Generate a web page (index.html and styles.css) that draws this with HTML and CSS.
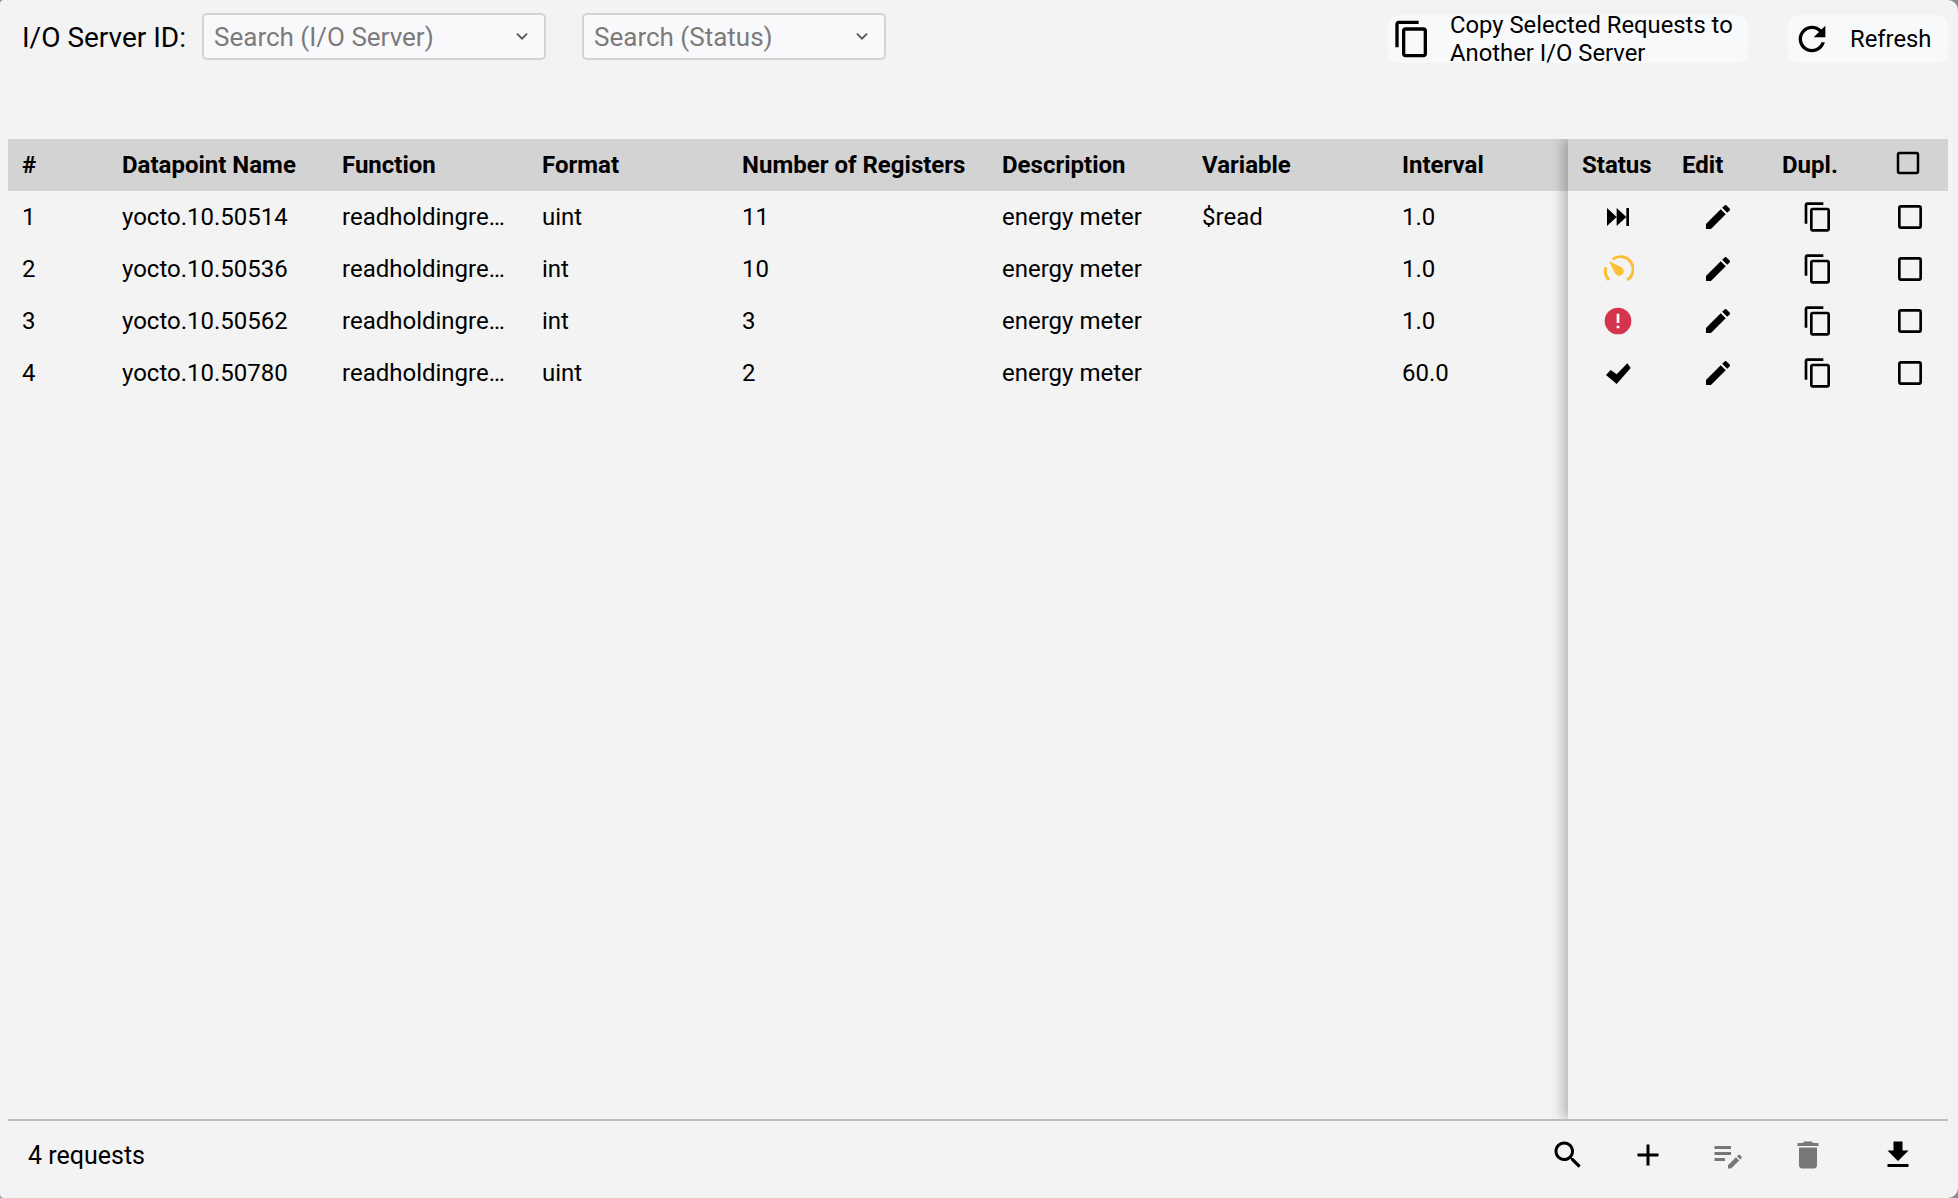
FILE: index.html
```html
<!DOCTYPE html>
<html lang="en">
<head>
<meta charset="utf-8">
<title>Requests</title>
<link rel="stylesheet" href="styles.css">
</head>
<body>
<svg class="defs" width="0" height="0" aria-hidden="true">
  <symbol id="i-copy" viewBox="0 0 24 24"><path d="M16 1H4c-1.1 0-2 .9-2 2v14h2V3h12V1zm3 4H8c-1.1 0-2 .9-2 2v14c0 1.1.9 2 2 2h11c1.1 0 2-.9 2-2V7c0-1.1-.9-2-2-2zm0 16H8V7h11v14z"/></symbol>
  <symbol id="i-edit" viewBox="0 0 24 24"><path d="M3 17.25V21h3.75L17.81 9.94l-3.75-3.75L3 17.25zM20.71 7.04c.39-.39.39-1.02 0-1.41l-2.34-2.34c-.39-.39-1.02-.39-1.41 0l-1.83 1.83 3.75 3.75 1.83-1.83z"/></symbol>
  <symbol id="i-box" viewBox="0 0 24 24"><path d="M19 5v14H5V5h14m0-2H5c-1.1 0-2 .9-2 2v14c0 1.1.9 2 2 2h14c1.1 0 2-.9 2-2V5c0-1.1-.9-2-2-2z"/></symbol>
</svg>
<div class="page">
  <header class="topbar">
    <span class="label">I/O Server ID:</span>
    <div class="select select-server"><span>Search (I/O Server)</span><svg class="chev" viewBox="0 0 12 8"><path d="M1.5 1.5 6 6l4.5-4.5" fill="none" stroke="#555" stroke-width="1.6"/></svg></div>
    <div class="select select-status"><span>Search (Status)</span><svg class="chev" viewBox="0 0 12 8"><path d="M1.5 1.5 6 6l4.5-4.5" fill="none" stroke="#555" stroke-width="1.6"/></svg></div>
    <button class="tbtn tbtn-copy" type="button"><svg class="ico40"><use href="#i-copy"/></svg><span class="tbtn-text">Copy Selected Requests to Another I/O Server</span></button>
    <button class="tbtn tbtn-refresh" type="button"><svg class="ico40" viewBox="0 0 24 24"><path d="M17.65 6.35C16.2 4.9 14.21 4 12 4c-4.42 0-7.99 3.58-7.99 8s3.57 8 7.99 8c3.73 0 6.84-2.55 7.73-6h-2.08c-.82 2.33-3.04 4-5.65 4-3.31 0-6-2.69-6-6s2.69-6 6-6c1.66 0 3.14.69 4.22 1.78L13 11h7V4l-2.35 2.35z"/></svg><span class="tbtn-text">Refresh</span></button>
  </header>
  <main class="table">
    <div class="pane-main">
      <div class="row head">
        <div class="c c1">#</div><div class="c c2">Datapoint Name</div><div class="c c3">Function</div><div class="c c4">Format</div><div class="c c5">Number of Registers</div><div class="c c6">Description</div><div class="c c7">Variable</div><div class="c c8">Interval</div>
      </div>
      <div class="row">
        <div class="c c1">1</div><div class="c c2">yocto.10.50514</div><div class="c c3">readholdingre…</div><div class="c c4">uint</div><div class="c c5">11</div><div class="c c6">energy meter</div><div class="c c7">$read</div><div class="c c8">1.0</div>
      </div>
      <div class="row">
        <div class="c c1">2</div><div class="c c2">yocto.10.50536</div><div class="c c3">readholdingre…</div><div class="c c4">int</div><div class="c c5">10</div><div class="c c6">energy meter</div><div class="c c7"></div><div class="c c8">1.0</div>
      </div>
      <div class="row">
        <div class="c c1">3</div><div class="c c2">yocto.10.50562</div><div class="c c3">readholdingre…</div><div class="c c4">int</div><div class="c c5">3</div><div class="c c6">energy meter</div><div class="c c7"></div><div class="c c8">1.0</div>
      </div>
      <div class="row">
        <div class="c c1">4</div><div class="c c2">yocto.10.50780</div><div class="c c3">readholdingre…</div><div class="c c4">uint</div><div class="c c5">2</div><div class="c c6">energy meter</div><div class="c c7"></div><div class="c c8">60.0</div>
      </div>
    </div>
    <div class="pane-side">
      <div class="row head">
        <div class="c s1">Status</div><div class="c s1">Edit</div><div class="c s1">Dupl.</div><div class="c s4 hbox"><svg class="ico30"><use href="#i-box"/></svg></div>
      </div>
      <div class="row">
        <div class="a s1"><svg class="ico32" viewBox="0 0 24 24"><path d="M3.75 5.250 11 12l-7.250 6.750zM11 5.250 18.250 12 11 18.750zM18.250 5.250h2v13.500h-2z"/></svg></div>
        <div class="a s1"><svg class="ico32"><use href="#i-edit"/></svg></div>
        <div class="a s1"><svg class="ico32"><use href="#i-copy"/></svg></div>
        <div class="a s4"><svg class="ico32"><use href="#i-box"/></svg></div>
      </div>
      <div class="row">
        <div class="a s1"><svg class="ico32" viewBox="0 0 24 24"><path d="M5.200 20.300A9.500 9.500 0 0 1 3 10.700M8 4.700A9.500 9.500 0 1 1 18.800 20.300" fill="none" stroke="#fbbf36" stroke-width="2.200"/><path d="M5.200 6 14.600 10.600A3.500 3.500 0 1 1 9.800 15.400z" fill="#fbbf36"/></svg></div>
        <div class="a s1"><svg class="ico32"><use href="#i-edit"/></svg></div>
        <div class="a s1"><svg class="ico32"><use href="#i-copy"/></svg></div>
        <div class="a s4"><svg class="ico32"><use href="#i-box"/></svg></div>
      </div>
      <div class="row">
        <div class="a s1"><svg class="ico32" viewBox="0 0 24 24"><circle cx="12" cy="12" r="10" fill="#d5344f"/><path d="M11 6.500h2v7h-2zM11 15.500h2v2h-2z" fill="#fff"/></svg></div>
        <div class="a s1"><svg class="ico32"><use href="#i-edit"/></svg></div>
        <div class="a s1"><svg class="ico32"><use href="#i-copy"/></svg></div>
        <div class="a s4"><svg class="ico32"><use href="#i-box"/></svg></div>
      </div>
      <div class="row">
        <div class="a s1"><svg class="ico32" viewBox="0 0 24 24"><path d="M3 13.500 6.500 9.750 11 13 19 4.750 21.500 8.250 11 20.250z"/></svg></div>
        <div class="a s1"><svg class="ico32"><use href="#i-edit"/></svg></div>
        <div class="a s1"><svg class="ico32"><use href="#i-copy"/></svg></div>
        <div class="a s4"><svg class="ico32"><use href="#i-box"/></svg></div>
      </div>
    </div>
  </main>
  <footer class="footer">
    <span class="count">4 requests</span>
    <div class="actions">
      <button class="fbtn" type="button"><svg class="ico36" viewBox="0 0 24 24"><path d="M15.500 14h-.79l-.28-.27C15.410 12.590 16 11.110 16 9.500 16 5.910 13.090 3 9.500 3S3 5.910 3 9.500 5.910 16 9.500 16c1.610 0 3.090-.59 4.230-1.570l.27.28v.79l5 4.990L20.490 19l-4.990-5zm-6 0C7.010 14 5 11.990 5 9.500S7.010 5 9.500 5 14 7.010 14 9.500 11.990 14 9.500 14z"/></svg></button>
      <button class="fbtn" type="button"><svg class="ico36" viewBox="0 0 24 24"><path d="M19 13h-6v6h-2v-6H5v-2h6V5h2v6h6v2z"/></svg></button>
      <button class="fbtn muted" type="button"><svg class="ico36" viewBox="0 0 24 24"><path d="M3 10h11v2H3zm0-2h11V6H3zm0 8h7v-2H3zm15.010-3.130l.71-.71c.39-.39 1.020-.39 1.410 0l.71.71c.39.39.39 1.020 0 1.410l-.71.71-2.120-2.120zm-.71.71l-5.300 5.300V21h2.120l5.300-5.300-2.120-2.120z"/></svg></button>
      <button class="fbtn muted" type="button"><svg class="ico36" viewBox="0 0 24 24"><path d="M6 19c0 1.100.9 2 2 2h8c1.100 0 2-.9 2-2V7H6v12zM19 4h-3.500l-1-1h-5l-1 1H5v2h14V4z"/></svg></button>
      <button class="fbtn last" type="button"><svg class="ico36" viewBox="0 0 24 24"><path d="M19 9h-4V3H9v6H5l7 7 7-7zM5 18v2h14v-2H5z"/></svg></button>
    </div>
  </footer>
</div>
</body>
</html>
```
FILE: styles.css
```css
* { box-sizing: border-box; }
html, body { margin: 0; height: 100%; background: #8a8b98; }
body { font-family: Roboto, "Liberation Sans", sans-serif; color: #000; overflow: hidden; }
.defs { position: absolute; }
svg { display: block; flex: none; }
.ico30 { width: 30px; height: 30px; }
.ico32 { width: 32px; height: 32px; }
.ico36 { width: 36px; height: 36px; }
.ico40 { width: 40px; height: 40px; }

.page { height: 1198px; display: flex; flex-direction: column; padding: 0 10px 0 8px; background: #f3f3f3; border-radius: 4px 10px 10px 4px; }

.topbar { height: 139px; flex: none; display: flex; align-items: flex-start; padding: 13px 0 0 14px; }
.label { font-size: 28px; line-height: 47px; margin-right: 16px; padding-top: 1px; }
.select { height: 47px; display: flex; align-items: center; justify-content: space-between; background: #f9f9fb; border: 2px solid #d3d3d3; border-radius: 5px; padding: 0 15px 0 10px; font-size: 26px; color: #7b7b7b; }
.select-server { width: 344px; margin-right: 36px; }
.select-status { width: 304px; }
.chev { width: 14px; height: 9px; }
.tbtn { display: flex; align-items: center; height: 48px; margin-top: 2px; padding: 0 0 0 4px; border: 0; border-radius: 10px; background: #f8f9fb; font: inherit; font-size: 23.800px; line-height: 28px; color: #000; text-align: left; }
.tbtn-text { margin-left: 18px; }
.tbtn-copy { width: 360px; margin-left: auto; }
.tbtn-refresh { width: 160px; margin-left: 40px; }

.table { flex: 1; min-height: 0; display: flex; border-bottom: 2px solid #bbb; }
.pane-main { flex: 1; min-width: 0; }
.pane-side { width: 380px; flex: none; position: relative; box-shadow: -6px 0 10px rgba(0,0,0,.22); clip-path: inset(0 0 0 -24px); background: #f3f3f3; }
.row { display: flex; height: 52px; font-size: 24px; }
.head { background: #d3d3d3; font-weight: 700; }
.c { display: flex; align-items: center; padding-left: 14px; white-space: nowrap; }
.a { display: flex; align-items: center; justify-content: center; }
.c1 { width: 100px; }
.c2 { width: 220px; }
.c3, .c4, .c6, .c7 { width: 200px; }
.c5 { width: 260px; }
.c8 { width: 180px; }
.s1 { width: 100px; }
.s4 { width: 80px; justify-content: center; padding: 0 0 0 4px; }
.hbox { padding: 0 0 4px 0; }

.footer { height: 77px; flex: none; display: flex; align-items: center; justify-content: space-between; padding: 0 10px 8px 20px; }
.count { font-size: 25px; }
.actions { display: flex; margin-bottom: 2px; }
.fbtn { width: 80px; height: 48px; display: flex; align-items: center; justify-content: center; padding: 0; border: 0; background: none; color: #000; }
.fbtn svg { fill: currentColor; }
.muted { color: #777; }
.last { margin-left: 10px; }
```
